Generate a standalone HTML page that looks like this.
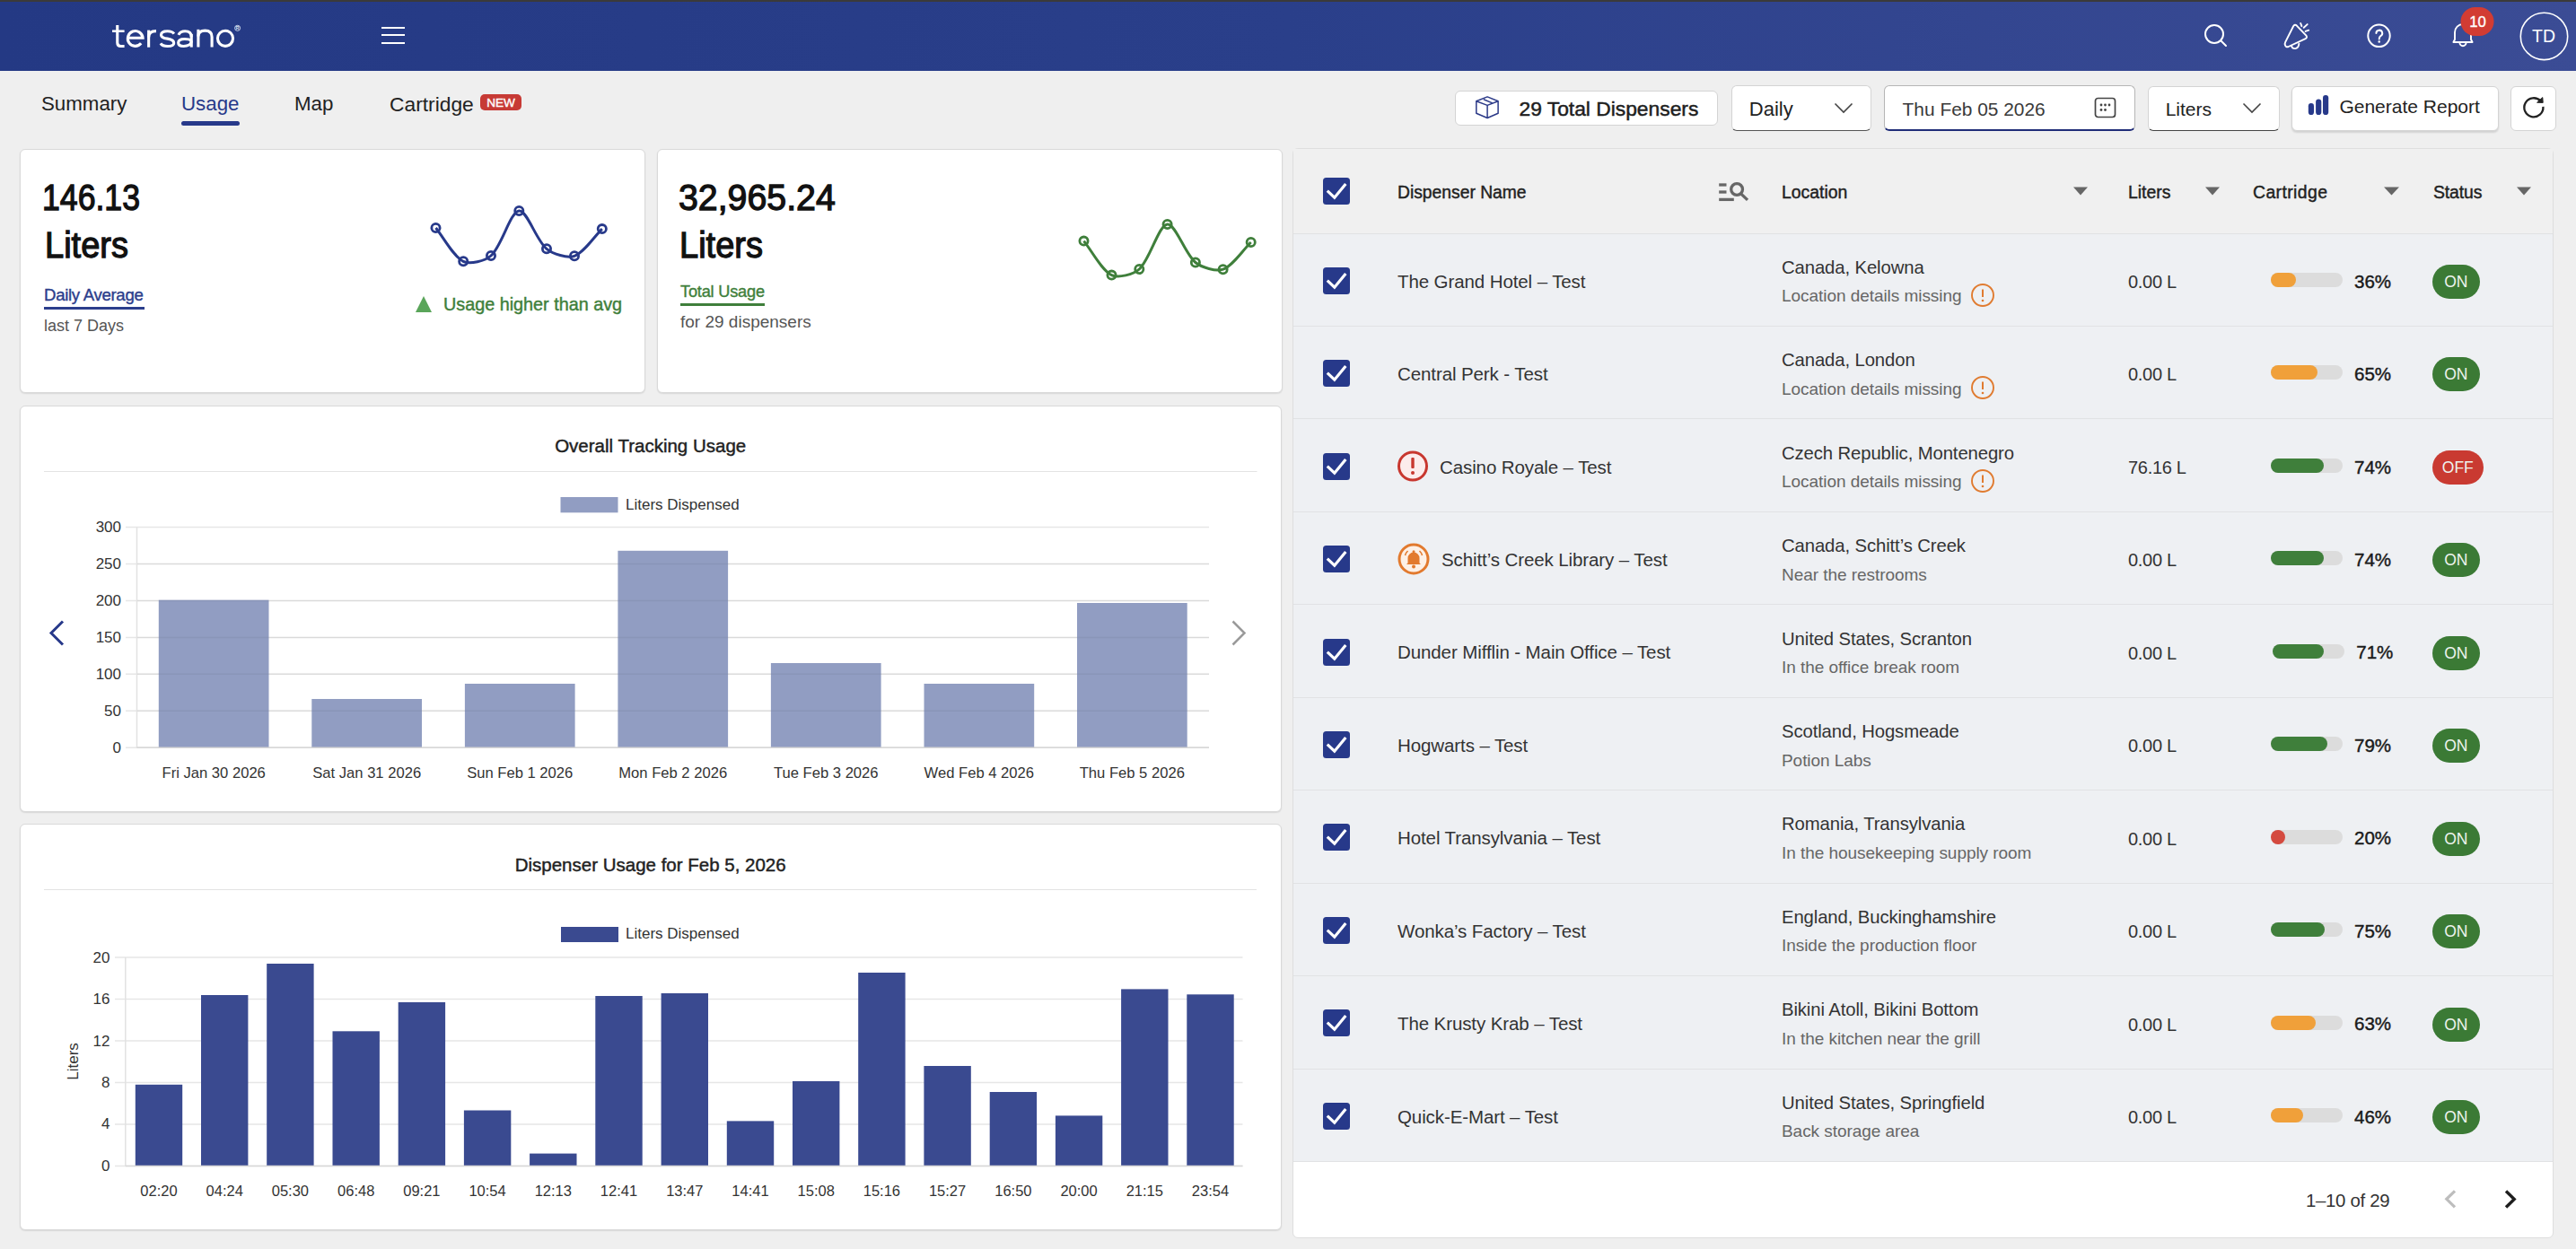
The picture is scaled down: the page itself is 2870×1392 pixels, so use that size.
<!DOCTYPE html>
<html><head><meta charset="utf-8"><style>
html,body{margin:0;padding:0;}
body{width:2870px;height:1392px;overflow:hidden;position:relative;background:#efefef;font-family:"Liberation Sans", sans-serif;}
.t{position:absolute;white-space:nowrap;line-height:1;}
</style></head><body>
<div style="position:absolute;left:0.0px;top:0.0px;width:2870.0px;height:2.0px;background:#3b3a3a;"></div><div style="position:absolute;left:0.0px;top:2.0px;width:2870.0px;height:77.0px;background:linear-gradient(90deg,#243984 0%,#2a3f8a 50%,#3b4c95 100%);"></div><svg style="position:absolute;left:0;top:0" width="300" height="80"><g fill="none" stroke="#fff" stroke-width="3.1"><path d="M130.75 28 L130.75 47.5 Q130.75 51.45 134.6 51.45 L138.6 51.45"/><path d="M125 34.7 L138.6 34.7" stroke-width="2.5"/><path d="M142.4 42.2 L159.1 42.2 A8.4 8.4 0 1 0 157.2 48.3"/><path d="M165.65 33.6 L165.65 52.7"/><path d="M165.65 41.5 C165.65 36.4 168.5 34.65 174 34.65"/><path d="M193.9 37.6 C192.3 35.3 189.6 34.75 186.6 34.75 C182.2 34.75 179.5 36.3 179.5 38.9 C179.5 41.7 182.6 42.5 186.6 43.1 C191 43.8 193.7 45 193.7 47.9 C193.7 50.7 190.9 51.45 186.6 51.45 C182.9 51.45 180.4 50.6 178.9 48.3"/><path d="M213.25 38 L213.25 52.6"/><path d="M198.9 38.9 C200.4 35.8 203.3 34.75 206.2 34.75 C210.6 34.75 213.25 37.1 213.25 41.2"/><path d="M213.25 45.2 C211.4 43.8 208.6 43.5 205.6 43.5 C201.2 43.5 198.65 45.2 198.65 47.8 C198.65 50.4 201 51.45 204.6 51.45 C209.2 51.45 213.25 49.6 213.25 45.6"/><path d="M220.9 32.8 L220.9 52.5"/><path d="M220.9 40.5 C220.9 36.2 223.7 34.15 228.5 34.15 C233.5 34.15 236.1 36.6 236.1 41.2 L236.1 52.5"/><circle cx="251" cy="42.8" r="8.55"/><circle cx="264.6" cy="31.3" r="3" stroke-width="0.9" stroke="#dfe6f5"/></g><text x="264.6" y="33.2" font-size="5" font-weight="bold" fill="#dfe6f5" text-anchor="middle">R</text></svg><div style="position:absolute;left:425.0px;top:29.5px;width:26.0px;height:2.0px;background:#fff;"></div><div style="position:absolute;left:425.0px;top:38.0px;width:26.0px;height:2.0px;background:#fff;"></div><div style="position:absolute;left:425.0px;top:46.5px;width:26.0px;height:2.0px;background:#fff;"></div><svg style="position:absolute;left:0;top:0" width="2870" height="80">
<g fill="none" stroke="#fff" stroke-width="2" stroke-linecap="round" stroke-linejoin="round">
<circle cx="2467" cy="38" r="10"/><line x1="2474.5" y1="45.5" x2="2480" y2="51"/>
<path d="M2555.2 29 Q2556.8 26.8 2558.6 28.3 L2569.4 39.6 Q2571 41.8 2568.6 43.1 L2549.6 52 Q2546.8 53 2545.9 50.2 Q2545.3 48.6 2546.2 46.8 Z" stroke-width="1.9"/>
<path d="M2553 51.3 Q2554 54.6 2557.5 54.1 Q2561 53.2 2561.4 48.6" stroke-width="1.9"/>
<line x1="2563.2" y1="26" x2="2564.4" y2="29.2" stroke-width="1.9"/><line x1="2566.7" y1="30.8" x2="2570.7" y2="27.1" stroke-width="1.9"/><line x1="2568.6" y1="34.9" x2="2572.2" y2="33.7" stroke-width="1.9"/>
<circle cx="2650.5" cy="39.8" r="12.2"/>
<path d="M2647.4 37 A3.4 3.4 0 1 1 2652.3 40.1 Q2650.7 41.1 2650.7 43.4"/>
<path d="M2735 44 L2735 36 A9 9 0 0 1 2753 36 L2753 44 L2754.6 47 L2733.4 47 Z" stroke-width="1.9"/>
<path d="M2740.4 47.6 A3.6 3.6 0 0 0 2747.6 47.6" stroke-width="1.9"/>
</g>
<circle cx="2650.7" cy="46.6" r="1.25" fill="#fff"/>
<rect x="2741.5" y="8" width="37" height="32" rx="16" fill="#d23c33"/>
<circle cx="2834.5" cy="40.4" r="26.2" fill="none" stroke="#fff" stroke-width="1.6"/>
</svg><div class="t" style="left:2760.5px;top:16.7px;font-size:16.8px;color:#fff;-webkit-text-stroke:0.35px #fff;letter-spacing:-0.2px;transform:translateX(-50%);">10</div><div class="t" style="left:2834.0px;top:31.4px;font-size:19.5px;color:#fff;font-weight:normal;transform:translateX(-50%);">TD</div><div class="t" style="left:46.0px;top:105.4px;font-size:22.3px;color:#222;font-weight:normal;">Summary</div><div class="t" style="left:202.0px;top:105.4px;font-size:22.3px;color:#27398a;font-weight:normal;">Usage</div><div style="position:absolute;left:202.0px;top:135.0px;width:65.0px;height:5.0px;background:#27398a;border-radius:3px;"></div><div class="t" style="left:328.0px;top:105.4px;font-size:22.3px;color:#222;font-weight:normal;">Map</div><div class="t" style="left:434.0px;top:105.0px;font-size:22.8px;color:#222;font-weight:normal;">Cartridge</div><div style="position:absolute;left:535px;top:104.5px;width:46px;height:18px;background:#c73a35;border-radius:5px;color:#fff;font-size:13.6px;-webkit-text-stroke:0.4px #fff;line-height:19.5px;text-align:center;">NEW</div><div style="position:absolute;left:1621.0px;top:101.0px;width:293.0px;height:39.0px;background:#fff;border:1px solid #d4d4d4;border-radius:6px;box-sizing:border-box;"></div><svg style="position:absolute;left:1640px;top:104px" width="34" height="32"><g fill="none" stroke="#2c3a88" stroke-width="1.5" stroke-linejoin="round">
<path d="M4.8 8.8 L17.1 3.9 L29.1 8.8 L29.1 22.2 L17.1 27.5 L4.8 22.2 Z"/><path d="M4.8 8.8 L17.1 13.4 L29.1 8.8"/><path d="M17.1 13.4 L17.1 27.5"/><path d="M12.9 6.7 L22.7 10.9"/></g></svg><div class="t" style="left:1692.5px;top:110.3px;font-size:22.8px;color:#1e1e1e;-webkit-text-stroke:0.48px #1e1e1e;">29 Total Dispensers</div><div style="position:absolute;left:1929.0px;top:95.0px;width:156.0px;height:51.0px;background:#fff;border:1px solid #d4d4d4;border-radius:6px;box-sizing:border-box;border-bottom:1.5px solid #555;"></div><div class="t" style="left:1948.8px;top:111.0px;font-size:22px;color:#222;font-weight:normal;">Daily</div><svg style="position:absolute;left:2040px;top:110px" width="30" height="22"><path d="M4.5 5.5 L14 15 L23.5 5.5" fill="none" stroke="#444" stroke-width="1.6"/></svg><div style="position:absolute;left:2099.0px;top:95.0px;width:280.0px;height:51.0px;background:#fff;border:1px solid #d4d4d4;border-radius:6px;box-sizing:border-box;border-color:#b5b5b5;border-bottom:2px solid #1f2c78;"></div><div class="t" style="left:2119.6px;top:111.9px;font-size:20.9px;color:#3a3a3a;font-weight:normal;">Thu Feb 05 2026</div><svg style="position:absolute;left:2330px;top:106px" width="32" height="30"><rect x="4.5" y="3.5" width="22" height="21" rx="3" fill="none" stroke="#444" stroke-width="1.7"/>
<g fill="#444"><circle cx="11" cy="11" r="1.4"/><circle cx="15.5" cy="11" r="1.4"/><circle cx="20" cy="11" r="1.4"/><circle cx="11" cy="16.5" r="1.4"/><circle cx="15.5" cy="16.5" r="1.4"/></g></svg><div style="position:absolute;left:2393.0px;top:96.0px;width:147.0px;height:50.0px;background:#fff;border:1px solid #d4d4d4;border-radius:6px;box-sizing:border-box;border-bottom:1.5px solid #444;"></div><div class="t" style="left:2412.7px;top:111.2px;font-size:21px;color:#222;font-weight:normal;">Liters</div><svg style="position:absolute;left:2495px;top:110px" width="30" height="22"><path d="M4.5 5.5 L14 15 L23.5 5.5" fill="none" stroke="#444" stroke-width="1.6"/></svg><div style="position:absolute;left:2553.0px;top:96.0px;width:231.0px;height:50.0px;background:#fff;border:1px solid #d4d4d4;border-radius:6px;box-sizing:border-box;box-shadow:0 2px 2px rgba(0,0,0,0.12);"></div><svg style="position:absolute;left:2568px;top:103px" width="30" height="28"><g stroke="#27398a" stroke-width="6.2" stroke-linecap="round">
<line x1="6.9" y1="15.2" x2="6.9" y2="21.9"/><line x1="15.2" y1="10.7" x2="15.2" y2="21.9"/><line x1="23.1" y1="6.2" x2="23.1" y2="21.9"/></g></svg><div class="t" style="left:2606.4px;top:108.2px;font-size:21px;color:#222;font-weight:normal;">Generate Report</div><div style="position:absolute;left:2797.0px;top:96.0px;width:50.5px;height:50.0px;background:#fff;border:1px solid #d4d4d4;border-radius:6px;box-sizing:border-box;"></div><svg style="position:absolute;left:2802px;top:100px" width="40" height="40"><path d="M28.6 12.6 A10.55 10.55 0 1 0 31.4 18.9" fill="none" stroke="#222" stroke-width="2.3"/>
<path d="M30.8 8.6 L31.2 14.4 L24.6 14.2 Z" fill="#222" stroke="#222" stroke-width="1" stroke-linejoin="round"/></svg><div style="position:absolute;left:22.4px;top:166.0px;width:696.6px;height:272.0px;background:#fff;border:1px solid #d9d9d9;border-radius:6px;box-sizing:border-box;box-shadow:0 1px 1.5px rgba(0,0,0,0.10);"></div><div style="position:absolute;left:731.5px;top:166.0px;width:697.5px;height:272.0px;background:#fff;border:1px solid #d9d9d9;border-radius:6px;box-sizing:border-box;box-shadow:0 1px 1.5px rgba(0,0,0,0.10);"></div><div style="position:absolute;left:22.4px;top:452.4px;width:1405.6px;height:452.6px;background:#fff;border:1px solid #d9d9d9;border-radius:6px;box-sizing:border-box;box-shadow:0 1px 1.5px rgba(0,0,0,0.10);"></div><div style="position:absolute;left:22.4px;top:917.8px;width:1405.6px;height:453.3px;background:#fff;border:1px solid #d9d9d9;border-radius:6px;box-sizing:border-box;box-shadow:0 1px 1.5px rgba(0,0,0,0.10);"></div><div style="position:absolute;left:1440.0px;top:165.0px;width:1405.0px;height:1214.5px;background:#fff;border:1px solid #dedede;border-radius:6px;box-sizing:border-box;overflow:hidden;"></div><div class="t" style="left:47px;top:199.9px;font-size:40.5px;color:#111;-webkit-text-stroke:1.30px #111;letter-spacing:0px;transform:scaleX(0.88);transform-origin:0 0;">146.13</div><div class="t" style="left:50px;top:252.7px;font-size:40px;color:#111;-webkit-text-stroke:1.28px #111;letter-spacing:0px;transform:scaleX(0.95);transform-origin:0 0;">Liters</div><div class="t" style="left:49.0px;top:320.2px;font-size:18.6px;color:#2c3e8c;-webkit-text-stroke:0.39px #2c3e8c;letter-spacing:-0.3px;">Daily Average</div><div style="position:absolute;left:49.0px;top:342.0px;width:112.0px;height:3.0px;background:#2c3e8c;"></div><div class="t" style="left:49.0px;top:353.7px;font-size:18px;color:#555;font-weight:normal;">last 7 Days</div><div class="t" style="left:494.0px;top:330.2px;font-size:19.8px;color:#3f7f3b;-webkit-text-stroke:0.42px #3f7f3b;">Usage higher than avg</div><div class="t" style="left:756px;top:199.9px;font-size:40.5px;color:#111;-webkit-text-stroke:1.30px #111;letter-spacing:0px;transform:scaleX(0.97);transform-origin:0 0;">32,965.24</div><div class="t" style="left:757px;top:252.7px;font-size:40px;color:#111;-webkit-text-stroke:1.28px #111;letter-spacing:0px;transform:scaleX(0.95);transform-origin:0 0;">Liters</div><div class="t" style="left:758.0px;top:315.5px;font-size:18.2px;color:#3f7f3b;-webkit-text-stroke:0.38px #3f7f3b;letter-spacing:-0.2px;">Total Usage</div><div style="position:absolute;left:758.0px;top:338.0px;width:94.0px;height:3.0px;background:#3f7f3b;"></div><div class="t" style="left:758.0px;top:348.9px;font-size:19px;color:#555;font-weight:normal;">for 29 dispensers</div><svg style="position:absolute;left:0;top:0" width="2870" height="1392"><path d="M485.5 254.0 C494.7 265.2 505.0 285.7 516.2 291.3 C523.5 295.0 540.5 290.9 547.0 285.0 C559.2 274.0 568.4 236.2 578.3 235.0 C587.0 233.9 597.5 267.9 609.0 277.3 C616.0 283.0 632.1 288.1 640.0 285.3 C650.6 281.5 661.6 264.2 670.8 255.1" fill="none" stroke="#27398a" stroke-width="3" stroke-linejoin="round"/><circle cx="485.5" cy="254.0" r="4.6" fill="none" stroke="#27398a" stroke-width="2.8"/><circle cx="516.2" cy="291.3" r="4.6" fill="none" stroke="#27398a" stroke-width="2.8"/><circle cx="547.0" cy="285.0" r="4.6" fill="none" stroke="#27398a" stroke-width="2.8"/><circle cx="578.3" cy="235.0" r="4.6" fill="none" stroke="#27398a" stroke-width="2.8"/><circle cx="609.0" cy="277.3" r="4.6" fill="none" stroke="#27398a" stroke-width="2.8"/><circle cx="640.0" cy="285.3" r="4.6" fill="none" stroke="#27398a" stroke-width="2.8"/><circle cx="670.8" cy="255.1" r="4.6" fill="none" stroke="#27398a" stroke-width="2.8"/><path d="M1207.5 268.6 C1216.8 280.0 1227.2 300.9 1238.5 306.6 C1245.8 310.3 1262.8 305.9 1269.3 300.0 C1281.4 288.9 1290.7 251.2 1300.6 250.0 C1309.5 248.9 1320.3 283.1 1331.9 292.5 C1338.9 298.1 1354.8 303.0 1362.6 300.2 C1373.3 296.3 1384.4 279.1 1393.7 270.0" fill="none" stroke="#3f7f3b" stroke-width="3" stroke-linejoin="round"/><circle cx="1207.5" cy="268.6" r="4.6" fill="none" stroke="#3f7f3b" stroke-width="2.8"/><circle cx="1238.5" cy="306.6" r="4.6" fill="none" stroke="#3f7f3b" stroke-width="2.8"/><circle cx="1269.3" cy="300.0" r="4.6" fill="none" stroke="#3f7f3b" stroke-width="2.8"/><circle cx="1300.6" cy="250.0" r="4.6" fill="none" stroke="#3f7f3b" stroke-width="2.8"/><circle cx="1331.9" cy="292.5" r="4.6" fill="none" stroke="#3f7f3b" stroke-width="2.8"/><circle cx="1362.6" cy="300.2" r="4.6" fill="none" stroke="#3f7f3b" stroke-width="2.8"/><circle cx="1393.7" cy="270.0" r="4.6" fill="none" stroke="#3f7f3b" stroke-width="2.8"/><path d="M463 348 L472 330 L481 348 Z" fill="#5aa55a"/><line x1="49" y1="525.5" x2="1400.5" y2="525.5" stroke="#e3e3e3" stroke-width="1"/><rect x="624.5" y="554" width="64" height="17.3" fill="#919dc2"/><line x1="140" y1="587.5" x2="1347" y2="587.5" stroke="#e6e6e6" stroke-width="1.5"/><line x1="140" y1="628.5" x2="1347" y2="628.5" stroke="#e6e6e6" stroke-width="1.5"/><line x1="140" y1="669.4" x2="1347" y2="669.4" stroke="#e6e6e6" stroke-width="1.5"/><line x1="140" y1="710.4" x2="1347" y2="710.4" stroke="#e6e6e6" stroke-width="1.5"/><line x1="140" y1="751.3" x2="1347" y2="751.3" stroke="#e6e6e6" stroke-width="1.5"/><line x1="140" y1="792.2" x2="1347" y2="792.2" stroke="#e6e6e6" stroke-width="1.5"/><line x1="140" y1="833.2" x2="1347" y2="833.2" stroke="#e6e6e6" stroke-width="1.5"/><line x1="152.5" y1="587.5" x2="152.5" y2="833.2" stroke="#e2e2e2" stroke-width="1.5"/><rect x="176.8" y="668.7" width="122.7" height="164.5" fill="#919dc2"/><rect x="347.3" y="779" width="122.7" height="54.2" fill="#919dc2"/><rect x="517.9" y="762" width="122.7" height="71.2" fill="#919dc2"/><rect x="688.4" y="613.8" width="122.7" height="219.4" fill="#919dc2"/><rect x="858.9" y="739" width="122.7" height="94.2" fill="#919dc2"/><rect x="1029.5" y="762" width="122.7" height="71.2" fill="#919dc2"/><rect x="1200.0" y="672" width="122.7" height="161.2" fill="#919dc2"/><line x1="153" y1="628.5" x2="1347" y2="628.5" stroke="rgba(0,0,0,0.05)" stroke-width="1.5"/><line x1="153" y1="669.4" x2="1347" y2="669.4" stroke="rgba(0,0,0,0.05)" stroke-width="1.5"/><line x1="153" y1="710.4" x2="1347" y2="710.4" stroke="rgba(0,0,0,0.05)" stroke-width="1.5"/><line x1="153" y1="751.3" x2="1347" y2="751.3" stroke="rgba(0,0,0,0.05)" stroke-width="1.5"/><line x1="153" y1="792.2" x2="1347" y2="792.2" stroke="rgba(0,0,0,0.05)" stroke-width="1.5"/><line x1="153" y1="833.2" x2="1347" y2="833.2" stroke="rgba(0,0,0,0.05)" stroke-width="1.5"/><line x1="152.5" y1="833.2" x2="1347" y2="833.2" stroke="#d8d8d8" stroke-width="1.5"/><text x="135" y="593.0" text-anchor="end" font-size="17" fill="#333">300</text><text x="135" y="634.0" text-anchor="end" font-size="17" fill="#333">250</text><text x="135" y="674.9" text-anchor="end" font-size="17" fill="#333">200</text><text x="135" y="715.9" text-anchor="end" font-size="17" fill="#333">150</text><text x="135" y="756.8" text-anchor="end" font-size="17" fill="#333">100</text><text x="135" y="797.8" text-anchor="end" font-size="17" fill="#333">50</text><text x="135" y="838.7" text-anchor="end" font-size="17" fill="#333">0</text><text x="238.2" y="867" text-anchor="middle" font-size="16.6" fill="#333">Fri Jan 30 2026</text><text x="408.7" y="867" text-anchor="middle" font-size="16.6" fill="#333">Sat Jan 31 2026</text><text x="579.2" y="867" text-anchor="middle" font-size="16.6" fill="#333">Sun Feb 1 2026</text><text x="749.7" y="867" text-anchor="middle" font-size="16.6" fill="#333">Mon Feb 2 2026</text><text x="920.3" y="867" text-anchor="middle" font-size="16.6" fill="#333">Tue Feb 3 2026</text><text x="1090.8" y="867" text-anchor="middle" font-size="16.6" fill="#333">Wed Feb 4 2026</text><text x="1261.3" y="867" text-anchor="middle" font-size="16.6" fill="#333">Thu Feb 5 2026</text><path d="M70 692.5 L57 705.5 L70 718.5" fill="none" stroke="#27398a" stroke-width="3"/><path d="M1373.5 692.5 L1386.5 705.5 L1373.5 718.5" fill="none" stroke="#9a9a9a" stroke-width="2.5"/><line x1="49" y1="991.5" x2="1400" y2="991.5" stroke="#e3e3e3" stroke-width="1"/><rect x="625" y="1033" width="64" height="17" fill="#3a4a90"/><line x1="128" y1="1067.0" x2="1384.5" y2="1067.0" stroke="#e6e6e6" stroke-width="1.5"/><line x1="128" y1="1113.5" x2="1384.5" y2="1113.5" stroke="#e6e6e6" stroke-width="1.5"/><line x1="128" y1="1160.0" x2="1384.5" y2="1160.0" stroke="#e6e6e6" stroke-width="1.5"/><line x1="128" y1="1206.4" x2="1384.5" y2="1206.4" stroke="#e6e6e6" stroke-width="1.5"/><line x1="128" y1="1252.9" x2="1384.5" y2="1252.9" stroke="#e6e6e6" stroke-width="1.5"/><line x1="128" y1="1299.4" x2="1384.5" y2="1299.4" stroke="#e6e6e6" stroke-width="1.5"/><line x1="139.8" y1="1067" x2="139.8" y2="1299.4" stroke="#e2e2e2" stroke-width="1.5"/><rect x="150.8" y="1208.8" width="52.4" height="90.6" fill="#3a4a90"/><rect x="224.0" y="1109" width="52.4" height="190.4" fill="#3a4a90"/><rect x="297.2" y="1074" width="52.4" height="225.4" fill="#3a4a90"/><rect x="370.5" y="1149.3" width="52.4" height="150.1" fill="#3a4a90"/><rect x="443.7" y="1117" width="52.4" height="182.4" fill="#3a4a90"/><rect x="516.9" y="1237.5" width="52.4" height="61.9" fill="#3a4a90"/><rect x="590.1" y="1285.6" width="52.4" height="13.8" fill="#3a4a90"/><rect x="663.3" y="1110" width="52.4" height="189.4" fill="#3a4a90"/><rect x="736.6" y="1107" width="52.4" height="192.4" fill="#3a4a90"/><rect x="809.8" y="1249.4" width="52.4" height="50.0" fill="#3a4a90"/><rect x="883.0" y="1205" width="52.4" height="94.4" fill="#3a4a90"/><rect x="956.2" y="1084" width="52.4" height="215.4" fill="#3a4a90"/><rect x="1029.4" y="1188" width="52.4" height="111.4" fill="#3a4a90"/><rect x="1102.7" y="1217" width="52.4" height="82.4" fill="#3a4a90"/><rect x="1175.9" y="1243.4" width="52.4" height="56.0" fill="#3a4a90"/><rect x="1249.1" y="1102.4" width="52.4" height="197.0" fill="#3a4a90"/><rect x="1322.3" y="1108.3" width="52.4" height="191.1" fill="#3a4a90"/><line x1="139.8" y1="1299.4" x2="1384.5" y2="1299.4" stroke="#d8d8d8" stroke-width="1.5"/><text x="122.5" y="1072.5" text-anchor="end" font-size="17" fill="#333">20</text><text x="122.5" y="1119.0" text-anchor="end" font-size="17" fill="#333">16</text><text x="122.5" y="1165.5" text-anchor="end" font-size="17" fill="#333">12</text><text x="122.5" y="1211.9" text-anchor="end" font-size="17" fill="#333">8</text><text x="122.5" y="1258.4" text-anchor="end" font-size="17" fill="#333">4</text><text x="122.5" y="1304.9" text-anchor="end" font-size="17" fill="#333">0</text><text x="177.0" y="1333" text-anchor="middle" font-size="16.5" fill="#333">02:20</text><text x="250.2" y="1333" text-anchor="middle" font-size="16.5" fill="#333">04:24</text><text x="323.4" y="1333" text-anchor="middle" font-size="16.5" fill="#333">05:30</text><text x="396.7" y="1333" text-anchor="middle" font-size="16.5" fill="#333">06:48</text><text x="469.9" y="1333" text-anchor="middle" font-size="16.5" fill="#333">09:21</text><text x="543.1" y="1333" text-anchor="middle" font-size="16.5" fill="#333">10:54</text><text x="616.3" y="1333" text-anchor="middle" font-size="16.5" fill="#333">12:13</text><text x="689.5" y="1333" text-anchor="middle" font-size="16.5" fill="#333">12:41</text><text x="762.8" y="1333" text-anchor="middle" font-size="16.5" fill="#333">13:47</text><text x="836.0" y="1333" text-anchor="middle" font-size="16.5" fill="#333">14:41</text><text x="909.2" y="1333" text-anchor="middle" font-size="16.5" fill="#333">15:08</text><text x="982.4" y="1333" text-anchor="middle" font-size="16.5" fill="#333">15:16</text><text x="1055.6" y="1333" text-anchor="middle" font-size="16.5" fill="#333">15:27</text><text x="1128.9" y="1333" text-anchor="middle" font-size="16.5" fill="#333">16:50</text><text x="1202.1" y="1333" text-anchor="middle" font-size="16.5" fill="#333">20:00</text><text x="1275.3" y="1333" text-anchor="middle" font-size="16.5" fill="#333">21:15</text><text x="1348.5" y="1333" text-anchor="middle" font-size="16.5" fill="#333">23:54</text><text transform="translate(87 1183) rotate(-90)" text-anchor="middle" font-size="17" fill="#333">Liters</text></svg><div class="t" style="left:724.7px;top:487.3px;font-size:20.5px;color:#222;-webkit-text-stroke:0.43px #222;transform:translateX(-50%);">Overall Tracking Usage</div><div class="t" style="left:697.0px;top:553.5px;font-size:17px;color:#333;font-weight:normal;">Liters Dispensed</div><div class="t" style="left:724.7px;top:953.6px;font-size:20.5px;color:#222;-webkit-text-stroke:0.43px #222;transform:translateX(-50%);">Dispenser Usage for Feb 5, 2026</div><div class="t" style="left:697.0px;top:1032.0px;font-size:17px;color:#333;font-weight:normal;">Liters Dispensed</div><div style="position:absolute;left:1441.0px;top:166.0px;width:1403.0px;height:94.0px;background:#f0f0f0;"></div><div style="position:absolute;left:1441.0px;top:260.0px;width:1403.0px;height:1034.5px;background:#eef0f3;"></div><div style="position:absolute;left:1441.0px;top:259.5px;width:1403.0px;height:1.0px;background:#e1e2e4;"></div><div style="position:absolute;left:1441.0px;top:362.9px;width:1403.0px;height:1.0px;background:#e1e2e4;"></div><div style="position:absolute;left:1441.0px;top:466.4px;width:1403.0px;height:1.0px;background:#e1e2e4;"></div><div style="position:absolute;left:1441.0px;top:569.9px;width:1403.0px;height:1.0px;background:#e1e2e4;"></div><div style="position:absolute;left:1441.0px;top:673.3px;width:1403.0px;height:1.0px;background:#e1e2e4;"></div><div style="position:absolute;left:1441.0px;top:776.8px;width:1403.0px;height:1.0px;background:#e1e2e4;"></div><div style="position:absolute;left:1441.0px;top:880.2px;width:1403.0px;height:1.0px;background:#e1e2e4;"></div><div style="position:absolute;left:1441.0px;top:983.6px;width:1403.0px;height:1.0px;background:#e1e2e4;"></div><div style="position:absolute;left:1441.0px;top:1087.1px;width:1403.0px;height:1.0px;background:#e1e2e4;"></div><div style="position:absolute;left:1441.0px;top:1190.6px;width:1403.0px;height:1.0px;background:#e1e2e4;"></div><div style="position:absolute;left:1441.0px;top:1294.0px;width:1403.0px;height:1.0px;background:#e1e2e4;"></div><svg style="position:absolute;left:1474px;top:197.8px" width="30" height="30"><rect x="0" y="0" width="30" height="30" rx="3.5" fill="#27398a"/><path d="M4.8 14.6 L12.8 22.2 L25.3 7" fill="none" stroke="#fff" stroke-width="3.2"/></svg><div class="t" style="left:1557.0px;top:204.6px;font-size:19.3px;color:#222;-webkit-text-stroke:0.41px #222;">Dispenser Name</div><svg style="position:absolute;left:1912px;top:200px" width="40" height="28"><g stroke="#666" stroke-width="3.3" fill="none" stroke-linecap="butt"><line x1="3.2" y1="6" x2="11.5" y2="6"/><line x1="3.2" y1="14" x2="11.5" y2="14"/><line x1="3.2" y1="22.4" x2="19.8" y2="22.4"/><circle cx="23.1" cy="11" r="6.4"/><line x1="27.6" y1="15.9" x2="35" y2="22.9"/></g></svg><div class="t" style="left:1985.0px;top:204.5px;font-size:19.4px;color:#222;-webkit-text-stroke:0.41px #222;">Location</div><svg style="position:absolute;left:2310px;top:207px" width="18" height="12"><path d="M0 1.5 L16 1.5 L8.0 10.5 Z" fill="#666"/></svg><div class="t" style="left:2371.0px;top:204.5px;font-size:19.4px;color:#222;-webkit-text-stroke:0.41px #222;">Liters</div><svg style="position:absolute;left:2457px;top:207px" width="18" height="12"><path d="M0 1.5 L16 1.5 L8.0 10.5 Z" fill="#666"/></svg><div class="t" style="left:2510.0px;top:204.5px;font-size:19.4px;color:#222;-webkit-text-stroke:0.41px #222;letter-spacing:0.4px;">Cartridge</div><svg style="position:absolute;left:2656px;top:207px" width="19" height="12"><path d="M0 1.5 L17 1.5 L8.5 10.5 Z" fill="#666"/></svg><div class="t" style="left:2711.0px;top:204.5px;font-size:19.4px;color:#222;-webkit-text-stroke:0.41px #222;letter-spacing:-0.1px;">Status</div><svg style="position:absolute;left:2804px;top:207px" width="18" height="12"><path d="M0 1.5 L16 1.5 L8.0 10.5 Z" fill="#666"/></svg><svg style="position:absolute;left:1474px;top:297.7px" width="30" height="30"><rect x="0" y="0" width="30" height="30" rx="3.5" fill="#27398a"/><path d="M4.8 14.6 L12.8 22.2 L25.3 7" fill="none" stroke="#fff" stroke-width="3.2"/></svg><div class="t" style="left:1557.0px;top:303.6px;font-size:20.5px;color:#333;font-weight:normal;letter-spacing:-0.1px;">The Grand Hotel – Test</div><div class="t" style="left:1985.0px;top:287.7px;font-size:20.3px;color:#333;font-weight:normal;letter-spacing:-0.1px;">Canada, Kelowna</div><div class="t" style="left:1985.0px;top:320.2px;font-size:19px;color:#666;font-weight:normal;letter-spacing:-0.05px;">Location details missing</div><svg style="position:absolute;left:2194px;top:316.0px" width="30" height="28"><circle cx="15" cy="13" r="12" fill="none" stroke="#e07b30" stroke-width="1.9"/><line x1="15" y1="6.5" x2="15" y2="15" stroke="#e07b30" stroke-width="2"/><circle cx="15" cy="19" r="1.3" fill="#e07b30"/></svg><div class="t" style="left:2371.0px;top:304.0px;font-size:20px;color:#333;font-weight:normal;letter-spacing:-0.3px;">0.00 L</div><div style="position:absolute;left:2529.6px;top:304.0px;width:80.0px;height:16.0px;background:#dcdcdc;border-radius:8px;"></div><div style="position:absolute;left:2529.6px;top:304.0px;width:28.8px;height:16.0px;background:#f0a03a;border-radius:8px;"></div><div class="t" style="left:2623.0px;top:303.6px;font-size:20.5px;color:#1a1a1a;-webkit-text-stroke:0.43px #1a1a1a;">36%</div><div style="position:absolute;left:2709.8px;top:295.0px;width:53px;height:38px;border-radius:19px;background:#3b7a35;color:#eef3ee;font-size:17.5px;line-height:39px;text-align:center;">ON</div><svg style="position:absolute;left:1474px;top:401.1px" width="30" height="30"><rect x="0" y="0" width="30" height="30" rx="3.5" fill="#27398a"/><path d="M4.8 14.6 L12.8 22.2 L25.3 7" fill="none" stroke="#fff" stroke-width="3.2"/></svg><div class="t" style="left:1557.0px;top:407.0px;font-size:20.5px;color:#333;font-weight:normal;letter-spacing:-0.1px;">Central Perk - Test</div><div class="t" style="left:1985.0px;top:391.2px;font-size:20.3px;color:#333;font-weight:normal;letter-spacing:-0.1px;">Canada, London</div><div class="t" style="left:1985.0px;top:423.7px;font-size:19px;color:#666;font-weight:normal;letter-spacing:-0.05px;">Location details missing</div><svg style="position:absolute;left:2194px;top:419.4px" width="30" height="28"><circle cx="15" cy="13" r="12" fill="none" stroke="#e07b30" stroke-width="1.9"/><line x1="15" y1="6.5" x2="15" y2="15" stroke="#e07b30" stroke-width="2"/><circle cx="15" cy="19" r="1.3" fill="#e07b30"/></svg><div class="t" style="left:2371.0px;top:407.4px;font-size:20px;color:#333;font-weight:normal;letter-spacing:-0.3px;">0.00 L</div><div style="position:absolute;left:2529.6px;top:407.4px;width:80.0px;height:16.0px;background:#dcdcdc;border-radius:8px;"></div><div style="position:absolute;left:2529.6px;top:407.4px;width:52.0px;height:16.0px;background:#f0a03a;border-radius:8px;"></div><div class="t" style="left:2623.0px;top:407.0px;font-size:20.5px;color:#1a1a1a;-webkit-text-stroke:0.43px #1a1a1a;">65%</div><div style="position:absolute;left:2709.8px;top:398.4px;width:53px;height:38px;border-radius:19px;background:#3b7a35;color:#eef3ee;font-size:17.5px;line-height:39px;text-align:center;">ON</div><svg style="position:absolute;left:1474px;top:504.6px" width="30" height="30"><rect x="0" y="0" width="30" height="30" rx="3.5" fill="#27398a"/><path d="M4.8 14.6 L12.8 22.2 L25.3 7" fill="none" stroke="#fff" stroke-width="3.2"/></svg><svg style="position:absolute;left:1555px;top:500.4px" width="38" height="38"><circle cx="19" cy="19.5" r="15.5" fill="#fcecec" stroke="#c8372f" stroke-width="3"/><rect x="17.3" y="10" width="3.4" height="12" rx="1" fill="#c8372f"/><circle cx="19" cy="27" r="2" fill="#c8372f"/></svg><div class="t" style="left:1604.0px;top:510.5px;font-size:20.5px;color:#333;font-weight:normal;letter-spacing:-0.1px;">Casino Royale – Test</div><div class="t" style="left:1985.0px;top:494.6px;font-size:20.3px;color:#333;font-weight:normal;letter-spacing:-0.1px;">Czech Republic, Montenegro</div><div class="t" style="left:1985.0px;top:527.1px;font-size:19px;color:#666;font-weight:normal;letter-spacing:-0.05px;">Location details missing</div><svg style="position:absolute;left:2194px;top:522.9px" width="30" height="28"><circle cx="15" cy="13" r="12" fill="none" stroke="#e07b30" stroke-width="1.9"/><line x1="15" y1="6.5" x2="15" y2="15" stroke="#e07b30" stroke-width="2"/><circle cx="15" cy="19" r="1.3" fill="#e07b30"/></svg><div class="t" style="left:2371.0px;top:510.9px;font-size:20px;color:#333;font-weight:normal;letter-spacing:-0.3px;">76.16 L</div><div style="position:absolute;left:2529.6px;top:510.9px;width:80.0px;height:16.0px;background:#dcdcdc;border-radius:8px;"></div><div style="position:absolute;left:2529.6px;top:510.9px;width:59.2px;height:16.0px;background:#3f7f3b;border-radius:8px;"></div><div class="t" style="left:2623.0px;top:510.5px;font-size:20.5px;color:#1a1a1a;-webkit-text-stroke:0.43px #1a1a1a;">74%</div><div style="position:absolute;left:2709.8px;top:501.9px;width:57px;height:38px;border-radius:19px;background:#c93a31;color:#eef3ee;font-size:17.5px;line-height:39px;text-align:center;">OFF</div><svg style="position:absolute;left:1474px;top:608.1px" width="30" height="30"><rect x="0" y="0" width="30" height="30" rx="3.5" fill="#27398a"/><path d="M4.8 14.6 L12.8 22.2 L25.3 7" fill="none" stroke="#fff" stroke-width="3.2"/></svg><svg style="position:absolute;left:1556px;top:604.1px" width="38" height="38"><circle cx="19" cy="19" r="16" fill="#fdf0e6" stroke="#e27a2e" stroke-width="3"/><path d="M12.5 23.5 L12.5 18 A6.5 6.5 0 0 1 25.5 18 L25.5 23.5 L27 25 L11 25 Z" fill="#e27a2e"/><circle cx="19" cy="27.5" r="2" fill="#e27a2e"/><circle cx="19" cy="10.8" r="1.5" fill="#e27a2e"/><path d="M9.5 15 A10 10 0 0 1 12.5 10 M28.5 15 A10 10 0 0 0 25.5 10" fill="none" stroke="#e27a2e" stroke-width="1.6"/></svg><div class="t" style="left:1606.0px;top:613.9px;font-size:20.5px;color:#333;font-weight:normal;letter-spacing:-0.1px;">Schitt’s Creek Library – Test</div><div class="t" style="left:1985.0px;top:598.1px;font-size:20.3px;color:#333;font-weight:normal;letter-spacing:-0.1px;">Canada, Schitt’s Creek</div><div class="t" style="left:1985.0px;top:630.6px;font-size:19px;color:#666;font-weight:normal;letter-spacing:-0.05px;">Near the restrooms</div><div class="t" style="left:2371.0px;top:614.4px;font-size:20px;color:#333;font-weight:normal;letter-spacing:-0.3px;">0.00 L</div><div style="position:absolute;left:2529.6px;top:614.4px;width:80.0px;height:16.0px;background:#dcdcdc;border-radius:8px;"></div><div style="position:absolute;left:2529.6px;top:614.4px;width:59.2px;height:16.0px;background:#3f7f3b;border-radius:8px;"></div><div class="t" style="left:2623.0px;top:613.9px;font-size:20.5px;color:#1a1a1a;-webkit-text-stroke:0.43px #1a1a1a;">74%</div><div style="position:absolute;left:2709.8px;top:605.4px;width:53px;height:38px;border-radius:19px;background:#3b7a35;color:#eef3ee;font-size:17.5px;line-height:39px;text-align:center;">ON</div><svg style="position:absolute;left:1474px;top:711.5px" width="30" height="30"><rect x="0" y="0" width="30" height="30" rx="3.5" fill="#27398a"/><path d="M4.8 14.6 L12.8 22.2 L25.3 7" fill="none" stroke="#fff" stroke-width="3.2"/></svg><div class="t" style="left:1557.0px;top:717.4px;font-size:20.5px;color:#333;font-weight:normal;letter-spacing:-0.1px;">Dunder Mifflin - Main Office – Test</div><div class="t" style="left:1985.0px;top:701.5px;font-size:20.3px;color:#333;font-weight:normal;letter-spacing:-0.1px;">United States, Scranton</div><div class="t" style="left:1985.0px;top:734.0px;font-size:19px;color:#666;font-weight:normal;letter-spacing:-0.05px;">In the office break room</div><div class="t" style="left:2371.0px;top:717.8px;font-size:20px;color:#333;font-weight:normal;letter-spacing:-0.3px;">0.00 L</div><div style="position:absolute;left:2531.9px;top:717.8px;width:80.0px;height:16.0px;background:#dcdcdc;border-radius:8px;"></div><div style="position:absolute;left:2531.9px;top:717.8px;width:56.8px;height:16.0px;background:#3f7f3b;border-radius:8px;"></div><div class="t" style="left:2625.3px;top:717.4px;font-size:20.5px;color:#1a1a1a;-webkit-text-stroke:0.43px #1a1a1a;">71%</div><div style="position:absolute;left:2709.8px;top:708.8px;width:53px;height:38px;border-radius:19px;background:#3b7a35;color:#eef3ee;font-size:17.5px;line-height:39px;text-align:center;">ON</div><svg style="position:absolute;left:1474px;top:815.0px" width="30" height="30"><rect x="0" y="0" width="30" height="30" rx="3.5" fill="#27398a"/><path d="M4.8 14.6 L12.8 22.2 L25.3 7" fill="none" stroke="#fff" stroke-width="3.2"/></svg><div class="t" style="left:1557.0px;top:820.8px;font-size:20.5px;color:#333;font-weight:normal;letter-spacing:-0.1px;">Hogwarts – Test</div><div class="t" style="left:1985.0px;top:805.0px;font-size:20.3px;color:#333;font-weight:normal;letter-spacing:-0.1px;">Scotland, Hogsmeade</div><div class="t" style="left:1985.0px;top:837.5px;font-size:19px;color:#666;font-weight:normal;letter-spacing:-0.05px;">Potion Labs</div><div class="t" style="left:2371.0px;top:821.2px;font-size:20px;color:#333;font-weight:normal;letter-spacing:-0.3px;">0.00 L</div><div style="position:absolute;left:2529.6px;top:821.2px;width:80.0px;height:16.0px;background:#dcdcdc;border-radius:8px;"></div><div style="position:absolute;left:2529.6px;top:821.2px;width:63.2px;height:16.0px;background:#3f7f3b;border-radius:8px;"></div><div class="t" style="left:2623.0px;top:820.8px;font-size:20.5px;color:#1a1a1a;-webkit-text-stroke:0.43px #1a1a1a;">79%</div><div style="position:absolute;left:2709.8px;top:812.2px;width:53px;height:38px;border-radius:19px;background:#3b7a35;color:#eef3ee;font-size:17.5px;line-height:39px;text-align:center;">ON</div><svg style="position:absolute;left:1474px;top:918.4px" width="30" height="30"><rect x="0" y="0" width="30" height="30" rx="3.5" fill="#27398a"/><path d="M4.8 14.6 L12.8 22.2 L25.3 7" fill="none" stroke="#fff" stroke-width="3.2"/></svg><div class="t" style="left:1557.0px;top:924.3px;font-size:20.5px;color:#333;font-weight:normal;letter-spacing:-0.1px;">Hotel Transylvania – Test</div><div class="t" style="left:1985.0px;top:908.4px;font-size:20.3px;color:#333;font-weight:normal;letter-spacing:-0.1px;">Romania, Transylvania</div><div class="t" style="left:1985.0px;top:941.0px;font-size:19px;color:#666;font-weight:normal;letter-spacing:-0.05px;">In the housekeeping supply room</div><div class="t" style="left:2371.0px;top:924.7px;font-size:20px;color:#333;font-weight:normal;letter-spacing:-0.3px;">0.00 L</div><div style="position:absolute;left:2529.6px;top:924.7px;width:80.0px;height:16.0px;background:#dcdcdc;border-radius:8px;"></div><div style="position:absolute;left:2529.6px;top:924.7px;width:16.0px;height:16.0px;background:#d44a3f;border-radius:8px;"></div><div class="t" style="left:2623.0px;top:924.3px;font-size:20.5px;color:#1a1a1a;-webkit-text-stroke:0.43px #1a1a1a;">20%</div><div style="position:absolute;left:2709.8px;top:915.7px;width:53px;height:38px;border-radius:19px;background:#3b7a35;color:#eef3ee;font-size:17.5px;line-height:39px;text-align:center;">ON</div><svg style="position:absolute;left:1474px;top:1021.9px" width="30" height="30"><rect x="0" y="0" width="30" height="30" rx="3.5" fill="#27398a"/><path d="M4.8 14.6 L12.8 22.2 L25.3 7" fill="none" stroke="#fff" stroke-width="3.2"/></svg><div class="t" style="left:1557.0px;top:1027.7px;font-size:20.5px;color:#333;font-weight:normal;letter-spacing:-0.1px;">Wonka’s Factory – Test</div><div class="t" style="left:1985.0px;top:1011.9px;font-size:20.3px;color:#333;font-weight:normal;letter-spacing:-0.1px;">England, Buckinghamshire</div><div class="t" style="left:1985.0px;top:1044.4px;font-size:19px;color:#666;font-weight:normal;letter-spacing:-0.05px;">Inside the production floor</div><div class="t" style="left:2371.0px;top:1028.2px;font-size:20px;color:#333;font-weight:normal;letter-spacing:-0.3px;">0.00 L</div><div style="position:absolute;left:2529.6px;top:1028.2px;width:80.0px;height:16.0px;background:#dcdcdc;border-radius:8px;"></div><div style="position:absolute;left:2529.6px;top:1028.2px;width:60.0px;height:16.0px;background:#3f7f3b;border-radius:8px;"></div><div class="t" style="left:2623.0px;top:1027.7px;font-size:20.5px;color:#1a1a1a;-webkit-text-stroke:0.43px #1a1a1a;">75%</div><div style="position:absolute;left:2709.8px;top:1019.1px;width:53px;height:38px;border-radius:19px;background:#3b7a35;color:#eef3ee;font-size:17.5px;line-height:39px;text-align:center;">ON</div><svg style="position:absolute;left:1474px;top:1125.3px" width="30" height="30"><rect x="0" y="0" width="30" height="30" rx="3.5" fill="#27398a"/><path d="M4.8 14.6 L12.8 22.2 L25.3 7" fill="none" stroke="#fff" stroke-width="3.2"/></svg><div class="t" style="left:1557.0px;top:1131.2px;font-size:20.5px;color:#333;font-weight:normal;letter-spacing:-0.1px;">The Krusty Krab – Test</div><div class="t" style="left:1985.0px;top:1115.3px;font-size:20.3px;color:#333;font-weight:normal;letter-spacing:-0.1px;">Bikini Atoll, Bikini Bottom</div><div class="t" style="left:1985.0px;top:1147.8px;font-size:19px;color:#666;font-weight:normal;letter-spacing:-0.05px;">In the kitchen near the grill</div><div class="t" style="left:2371.0px;top:1131.6px;font-size:20px;color:#333;font-weight:normal;letter-spacing:-0.3px;">0.00 L</div><div style="position:absolute;left:2529.6px;top:1131.6px;width:80.0px;height:16.0px;background:#dcdcdc;border-radius:8px;"></div><div style="position:absolute;left:2529.6px;top:1131.6px;width:50.4px;height:16.0px;background:#f0a03a;border-radius:8px;"></div><div class="t" style="left:2623.0px;top:1131.2px;font-size:20.5px;color:#1a1a1a;-webkit-text-stroke:0.43px #1a1a1a;">63%</div><div style="position:absolute;left:2709.8px;top:1122.6px;width:53px;height:38px;border-radius:19px;background:#3b7a35;color:#eef3ee;font-size:17.5px;line-height:39px;text-align:center;">ON</div><svg style="position:absolute;left:1474px;top:1228.8px" width="30" height="30"><rect x="0" y="0" width="30" height="30" rx="3.5" fill="#27398a"/><path d="M4.8 14.6 L12.8 22.2 L25.3 7" fill="none" stroke="#fff" stroke-width="3.2"/></svg><div class="t" style="left:1557.0px;top:1234.6px;font-size:20.5px;color:#333;font-weight:normal;letter-spacing:-0.1px;">Quick-E-Mart – Test</div><div class="t" style="left:1985.0px;top:1218.8px;font-size:20.3px;color:#333;font-weight:normal;letter-spacing:-0.1px;">United States, Springfield</div><div class="t" style="left:1985.0px;top:1251.3px;font-size:19px;color:#666;font-weight:normal;letter-spacing:-0.05px;">Back storage area</div><div class="t" style="left:2371.0px;top:1235.1px;font-size:20px;color:#333;font-weight:normal;letter-spacing:-0.3px;">0.00 L</div><div style="position:absolute;left:2529.6px;top:1235.1px;width:80.0px;height:16.0px;background:#dcdcdc;border-radius:8px;"></div><div style="position:absolute;left:2529.6px;top:1235.1px;width:36.8px;height:16.0px;background:#f0a03a;border-radius:8px;"></div><div class="t" style="left:2623.0px;top:1234.6px;font-size:20.5px;color:#1a1a1a;-webkit-text-stroke:0.43px #1a1a1a;">46%</div><div style="position:absolute;left:2709.8px;top:1226.1px;width:53px;height:38px;border-radius:19px;background:#3b7a35;color:#eef3ee;font-size:17.5px;line-height:39px;text-align:center;">ON</div><div class="t" style="left:2569.0px;top:1328.0px;font-size:20.4px;color:#333;font-weight:normal;letter-spacing:-0.3px;">1–10 of 29</div><svg style="position:absolute;left:2718px;top:1320px" width="90" height="32"><path d="M17 7.3 L7.8 16.3 L17 25.3" fill="none" stroke="#bdbdbd" stroke-width="3.2"/><path d="M74 7.5 L83.2 16.5 L74 25.5" fill="none" stroke="#1e1e1e" stroke-width="3.4"/></svg>
</body></html>
